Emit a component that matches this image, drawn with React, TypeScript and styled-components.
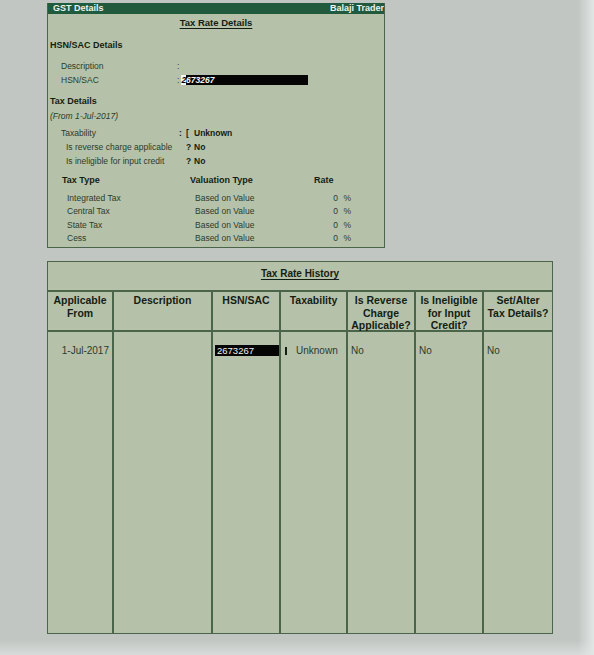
import React from "react";
import styled, { createGlobalStyle } from "styled-components";

const Global = createGlobalStyle`
  html, body { margin: 0; padding: 0; }
  body {
    width: 594px;
    height: 655px;
    overflow: hidden;
    background:
      linear-gradient(to right, rgba(230,236,234,0) 0, rgba(230,236,234,0) 578px, rgba(225,231,229,1) 594px),
      linear-gradient(to bottom, rgba(0,0,0,0) 640px, rgba(215,219,217,1) 655px),
      #c2c6c3;
    font-family: "Liberation Sans", Arial, sans-serif;
  }
`;

const GREEN = "#b5c2a9";
const LINE = "#4a654a";
const TEXT = "#2c3b2c";
const BOLD = "#141d14";

const Page = styled.div`
  display: flex;
  flex-direction: column;
  align-items: flex-start;
  padding: 3px 0 0 47px;
  gap: 13px;
`;

const TopPanel = styled.section`
  width: 338px;
  height: 245px;
  box-sizing: border-box;
  background: ${GREEN};
  border: 1.5px solid ${LINE};
  border-top: none;
  display: flex;
  flex-direction: column;
  & > * { flex-shrink: 0; }
`;

const TitleBar = styled.div`
  height: 11px;
  background: #215a3d;
  color: #eef3ee;
  font-weight: bold;
  font-size: 9px;
  line-height: 11px;
  display: flex;
  justify-content: space-between;
  padding: 0 0 0 5px;
  white-space: nowrap;
  overflow: hidden;
`;

const Line = styled.div<{ $mt?: number; $indent?: number; $center?: boolean }>`
  height: 14px;
  line-height: 14px;
  margin-top: ${(p) => p.$mt ?? 0}px;
  padding-left: ${(p) => p.$indent ?? 3}px;
  font-size: 8.5px;
  color: ${TEXT};
  display: flex;
  align-items: center;
  justify-content: ${(p) => (p.$center ? "center" : "flex-start")};
  white-space: nowrap;
`;

const CenterTitle = styled.div<{ $size: number }>`
  text-align: center;
  font-weight: bold;
  font-size: ${(p) => p.$size}px;
  color: ${BOLD};
  text-decoration: underline;
  text-underline-offset: 2px;
`;

const SectionHead = styled.span`
  font-weight: bold;
  font-size: 9px;
  color: ${BOLD};
`;

const Italic = styled.span`
  font-style: italic;
  font-size: 8.5px;
`;

const Label = styled.span<{ $w: number }>`
  display: inline-block;
  width: ${(p) => p.$w}px;
`;

const Value = styled.span`
  font-weight: bold;
  color: ${BOLD};
`;

const Mark = styled.span<{ $w?: number }>`
  display: inline-block;
  width: ${(p) => p.$w ?? 8}px;
  font-weight: bold;
  color: ${BOLD};
`;

const Field = styled.span`
  display: inline-block;
  width: 127px;
  height: 10px;
  line-height: 10px;
  background: #050505;
  color: #f4f4f4;
  font-weight: bold;
  font-style: italic;
  font-size: 8.5px;
  margin-left: 2px;
`;

const Cursor = styled.span`
  background: #f4f4f4;
  color: #050505;
`;

const TaxGrid = styled.div`
  display: grid;
  grid-template-columns: 128px 124px 24px 13px;
  grid-template-rows: 19px;
  grid-auto-rows: 13.3px;
  padding-left: 14px;
  margin-top: 5px;
  font-size: 8.5px;
  color: ${TEXT};
  align-items: start;
  white-space: nowrap;
`;

const TaxHead = styled.span`
  font-weight: bold;
  font-size: 9px;
  color: ${BOLD};
  line-height: 14px;
`;

const TaxCell = styled.span<{ $indent?: boolean; $right?: boolean }>`
  padding-left: ${(p) => (p.$indent ? 5 : 0)}px;
  text-align: ${(p) => (p.$right ? "right" : "left")};
  line-height: 13px;
`;

const BottomPanel = styled.section`
  width: 506px;
  height: 373px;
  box-sizing: border-box;
  background: ${GREEN};
  border: 1.5px solid ${LINE};
  display: flex;
  flex-direction: column;
`;

const HistoryTitle = styled.div`
  height: 30px;
  box-sizing: border-box;
  border-bottom: 2px solid ${LINE};
  padding-top: 5px;
  line-height: 13px;
`;

const Cols = "66px 99px 68px 67px 68px 68px 1fr";

const HeadRow = styled.div`
  display: grid;
  grid-template-columns: ${Cols};
  height: 40px;
  box-sizing: border-box;
  border-bottom: 2px solid ${LINE};
`;

const HeadCell = styled.div<{ $last?: boolean }>`
  border-right: ${(p) => (p.$last ? "none" : `2px solid ${LINE}`)};
  font-weight: bold;
  font-size: 10.5px;
  line-height: 12.5px;
  color: ${BOLD};
  text-align: center;
  padding-top: 2px;
`;

const BodyRow = styled.div`
  flex: 1;
  display: grid;
  grid-template-columns: ${Cols};
`;

const BodyCell = styled.div<{ $last?: boolean; $align?: string }>`
  border-right: ${(p) => (p.$last ? "none" : `2px solid ${LINE}`)};
  font-size: 10px;
  color: ${TEXT};
  padding: 13px 3px 0 3px;
  line-height: 12px;
  text-align: ${(p) => p.$align ?? "left"};
  white-space: nowrap;
`;

const HsnBox = styled.span`
  display: block;
  margin: 0 -3px 0 -1px;
  height: 11px;
  line-height: 11px;
  background: #050505;
  color: #f2f2f2;
  padding-left: 2px;
  font-size: 9.5px;
`;

const Bar = styled.span`
  display: inline-block;
  width: 2px;
  height: 8px;
  background: ${BOLD};
  margin: 0 9px 0 1px;
  vertical-align: -1px;
`;

const taxes = ["Integrated Tax", "Central Tax", "State Tax", "Cess"];

export default function App() {
  return (
    <>
      <Global />
      <Page>
        <TopPanel>
          <TitleBar>
            <span>GST Details</span>
            <span>Balaji Trader</span>
          </TitleBar>
          <Line $mt={2} $indent={0} $center>
            <CenterTitle $size={9.5}>Tax Rate Details</CenterTitle>
          </Line>
          <Line $mt={8} $indent={2}>
            <SectionHead>HSN/SAC Details</SectionHead>
          </Line>
          <Line $mt={7} $indent={13}>
            <Label $w={116}>Description</Label>:
          </Line>
          <Line $indent={13}>
            <Label $w={116}>HSN/SAC</Label>:
            <Field>
              <Cursor>2</Cursor>673267
            </Field>
          </Line>
          <Line $mt={7} $indent={2}>
            <SectionHead>Tax Details</SectionHead>
          </Line>
          <Line $mt={1} $indent={2}>
            <Italic>(From 1-Jul-2017)</Italic>
          </Line>
          <Line $mt={3} $indent={13}>
            <Label $w={118}>Taxability</Label>
            <Mark $w={7}>:</Mark>
            <Mark $w={8}>[</Mark>
            <Value>Unknown</Value>
          </Line>
          <Line $indent={18}>
            <Label $w={120}>Is reverse charge applicable</Label>
            <Mark>?</Mark>
            <Value>No</Value>
          </Line>
          <Line $indent={18}>
            <Label $w={120}>Is ineligible for input credit</Label>
            <Mark>?</Mark>
            <Value>No</Value>
          </Line>
          <TaxGrid>
            <TaxHead>Tax Type</TaxHead>
            <TaxHead>Valuation Type</TaxHead>
            <TaxHead>Rate</TaxHead>
            <TaxHead />
            {taxes.map((t) => (
              <React.Fragment key={t}>
                <TaxCell $indent>{t}</TaxCell>
                <TaxCell $indent>Based on Value</TaxCell>
                <TaxCell $right>0</TaxCell>
                <TaxCell $right>%</TaxCell>
              </React.Fragment>
            ))}
          </TaxGrid>
        </TopPanel>

        <BottomPanel>
          <HistoryTitle>
            <CenterTitle $size={10}>Tax Rate History</CenterTitle>
          </HistoryTitle>
          <HeadRow>
            <HeadCell>Applicable<br />From</HeadCell>
            <HeadCell>Description</HeadCell>
            <HeadCell>HSN/SAC</HeadCell>
            <HeadCell>Taxability</HeadCell>
            <HeadCell>Is Reverse<br />Charge<br />Applicable?</HeadCell>
            <HeadCell>Is Ineligible<br />for Input<br />Credit?</HeadCell>
            <HeadCell $last>Set/Alter<br />Tax Details?</HeadCell>
          </HeadRow>
          <BodyRow>
            <BodyCell $align="right">1-Jul-2017</BodyCell>
            <BodyCell />
            <BodyCell>
              <HsnBox>2673267</HsnBox>
            </BodyCell>
            <BodyCell>
              <Bar />Unknown
            </BodyCell>
            <BodyCell>No</BodyCell>
            <BodyCell>No</BodyCell>
            <BodyCell $last>No</BodyCell>
          </BodyRow>
        </BottomPanel>
      </Page>
    </>
  );
}
